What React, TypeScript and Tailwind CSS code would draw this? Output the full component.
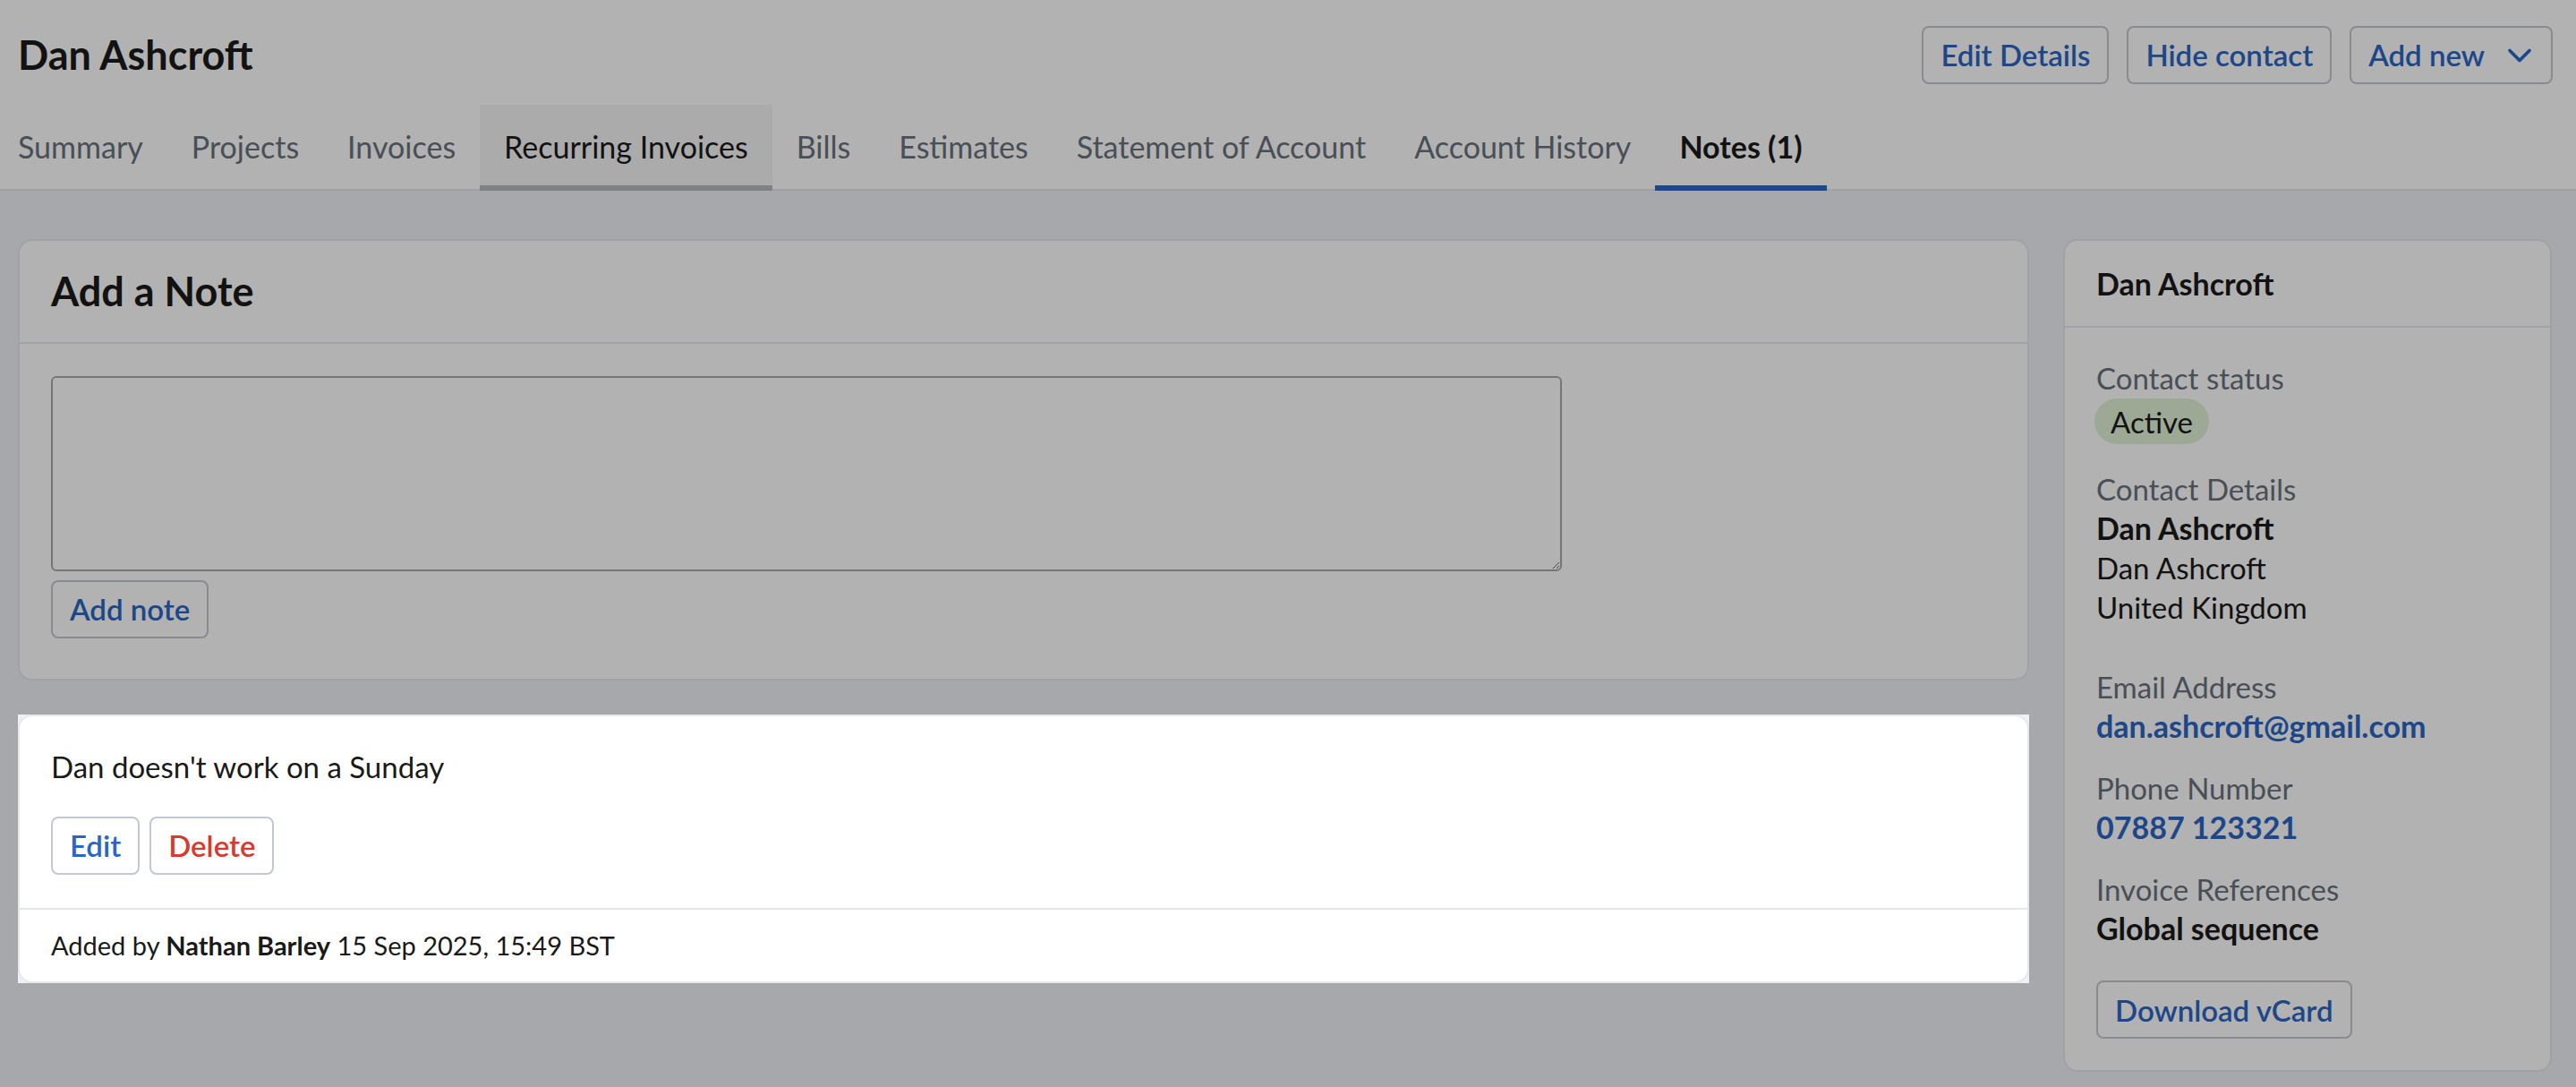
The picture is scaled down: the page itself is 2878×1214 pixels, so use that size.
import { ChevronDown } from "lucide-react";

const tabs = [
  { label: "Summary" },
  { label: "Projects" },
  { label: "Invoices" },
  { label: "Recurring Invoices", hover: true },
  { label: "Bills" },
  { label: "Estimates" },
  { label: "Statement of Account" },
  { label: "Account History" },
  { label: "Notes (1)", active: true },
];

function OutlineButton({ children, className = "" }: { children: React.ReactNode; className?: string }) {
  return (
    <button
      className={
        "flex h-[65px] items-center rounded-[8px] border-2 border-[#c3c7cf] bg-white px-[19px] text-[33px] font-semibold text-[#2a66c4] " +
        className
      }
    >
      {children}
    </button>
  );
}

function Field({ label, children, className = "" }: { label: string; children: React.ReactNode; className?: string }) {
  return (
    <div className={"mb-[25px] " + className}>
      <div className="text-[#69717b]">{label}</div>
      {children}
    </div>
  );
}

export default function App() {
  return (
    <div className="relative min-h-screen bg-[#eef1f6] font-['Lato',sans-serif] text-[#1a1a1a]">
      <header className="bg-white">
        <div className="flex items-center justify-between pl-[20px] pr-[26px] pt-[29px]">
          <h1 className="text-[45px] font-bold leading-[65px]">Dan Ashcroft</h1>
          <div className="flex gap-[20px]">
            <OutlineButton>Edit Details</OutlineButton>
            <OutlineButton>Hide contact</OutlineButton>
            <OutlineButton className="pr-[13px]">
              Add new
              <ChevronDown className="ml-[17px] h-[44px] w-[44px]" strokeWidth={2} />
            </OutlineButton>
          </div>
        </div>
        <nav className="mt-[23px] border-b-2 border-[#e8e9ee]">
          <div className="-mb-[2px] ml-[-7px] flex">
            {tabs.map((t) => (
              <div
                key={t.label}
                className={
                  "flex h-[96px] items-center border-b-[6px] px-[27px] pt-[3px] text-[34px] " +
                  (t.active
                    ? "border-[#2a66c4] font-bold text-[#1a1a1a]"
                    : t.hover
                      ? "border-[#b6bbbf] bg-[#f5f5f5] text-[#1a1a1a]"
                      : "border-transparent text-[#69717b]")
                }
              >
                {t.label}
              </div>
            ))}
          </div>
        </nav>
      </header>

      <main className="flex gap-[38px] pb-[15px] pl-[20px] pr-[27px] pt-[54px]">
        <div className="flex-1">
          <section className="rounded-[16px] border-2 border-[#e6e8ec] bg-white">
            <div className="flex h-[115px] items-center border-b-2 border-[#e6e8ec] px-[35px]">
              <h2 className="text-[45px] font-bold">Add a Note</h2>
            </div>
            <div className="px-[35px] pb-[45px] pt-[36px]">
              <textarea className="block h-[218px] w-[1688px] rounded-[6px] border-2 border-[#a9a9a9] bg-white" />
              <OutlineButton className="mt-[10px]">Add note</OutlineButton>
            </div>
          </section>

          {/* highlighted note sits above the dimming layer */}
          <div className="relative z-[60] mt-[38px] bg-[#eef1f6]">
            <div className="rounded-[16px] border-2 border-[#e6e8ec] bg-white">
              <div className="px-[35px] pb-[37px] pt-[34px]">
                <p className="text-[33px] leading-[44px]">Dan doesn't work on a Sunday</p>
                <div className="mt-[34px] flex gap-[11px]">
                  <OutlineButton>Edit</OutlineButton>
                  <OutlineButton className="text-[#d83a2f]">Delete</OutlineButton>
                </div>
              </div>
              <div className="border-t-2 border-[#e4e5ea] px-[35px] py-[20px] text-[29px] leading-[40px]">
                Added by <span className="font-bold">Nathan Barley</span> 15 Sep 2025, 15:49 BST
              </div>
            </div>
          </div>
        </div>

        <aside className="w-[546px] rounded-[16px] border-2 border-[#e6e8ec] bg-white text-[33px] leading-[44px]">
          <div className="flex h-[97px] items-center border-b-2 border-[#e6e8ec] px-[35px]">
            <h3 className="text-[34px] font-bold">Dan Ashcroft</h3>
          </div>
          <div className="px-[35px] pb-[35px] pt-[34px]">
            <div className="mb-[28px]">
              <div className="text-[#69717b]">Contact status</div>
              <span className="-ml-[2px] mt-[1px] inline-flex h-[51px] items-center rounded-full bg-[#e2f2d6] px-[18px]">
                Active
              </span>
            </div>
            <Field label="Contact Details" className="pb-[20px]">
              <div className="text-[34px] font-bold">Dan Ashcroft</div>
              <div>Dan Ashcroft</div>
              <div>United Kingdom</div>
            </Field>
            <Field label="Email Address">
              <div className="text-[34px] font-bold text-[#2a66c4]">dan.ashcroft@gmail.com</div>
            </Field>
            <Field label="Phone Number">
              <div className="text-[34px] font-bold text-[#2a66c4]">07887 123321</div>
            </Field>
            <Field label="Invoice References" className="mb-[36px]">
              <div className="text-[34px] font-bold">Global sequence</div>
            </Field>
            <OutlineButton className="h-[64px]">Download vCard</OutlineButton>
          </div>
        </aside>
      </main>

      <div className="absolute inset-0 z-50 bg-black/30" />
    </div>
  );
}
